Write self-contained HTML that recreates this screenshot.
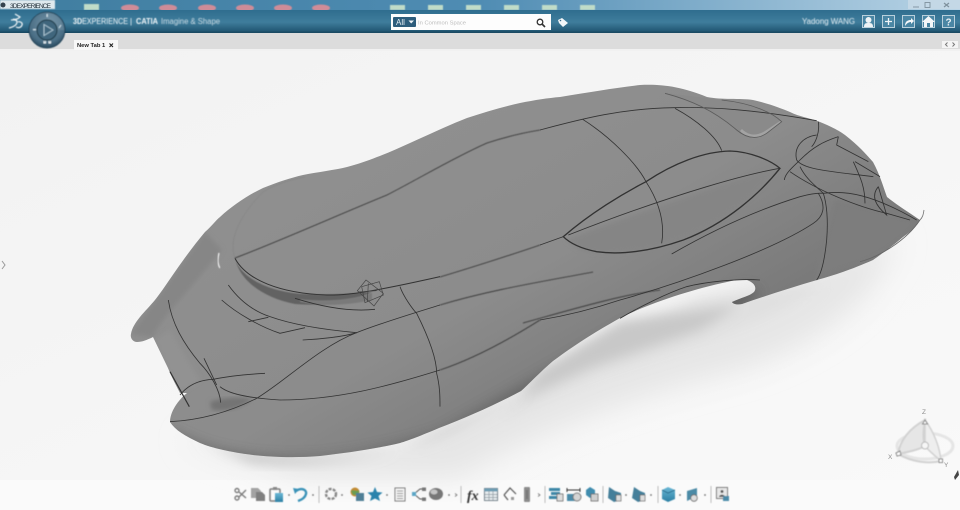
<!DOCTYPE html>
<html><head><meta charset="utf-8"><style>
html,body{margin:0;padding:0;background:#f6f6f6}
#p{position:relative;width:960px;height:510px;overflow:hidden;font-family:"Liberation Sans",sans-serif}
svg{position:absolute;left:0;top:0}
</style></head><body><div id="p">
<svg width="960" height="510" viewBox="0 0 960 510" xmlns="http://www.w3.org/2000/svg">
<defs>
<linearGradient id="bar" x1="0" y1="0" x2="0" y2="1"><stop offset="0" stop-color="#2f6d8e"/><stop offset=".55" stop-color="#3f7d9c"/><stop offset="1" stop-color="#1f5470"/></linearGradient>
<linearGradient id="sky" x1="0" y1="0" x2="1" y2="0"><stop offset="0" stop-color="#3f7d9f"/><stop offset=".5" stop-color="#4f8cb3"/><stop offset="1" stop-color="#b9d4e6"/></linearGradient>
<linearGradient id="bg" x1="0" y1="0" x2="1" y2="1"><stop offset="0" stop-color="#f2f2f2"/><stop offset="1" stop-color="#f9f9f9"/></linearGradient>
<linearGradient id="car" gradientUnits="userSpaceOnUse" x1="400" y1="140" x2="560" y2="420"><stop offset="0" stop-color="#8f8f8f"/><stop offset=".55" stop-color="#8c8c8c"/><stop offset="1" stop-color="#7a7a7a"/></linearGradient>
<radialGradient id="dial" cx=".5" cy=".35" r=".7"><stop offset="0" stop-color="#7393a7"/><stop offset=".7" stop-color="#4a6e85"/><stop offset="1" stop-color="#1c3c50"/></radialGradient>
<linearGradient id="blue" x1="0" y1="0" x2="0" y2="1"><stop offset="0" stop-color="#6bb8d6"/><stop offset="1" stop-color="#2b7fa3"/></linearGradient>
<filter id="b1"><feGaussianBlur stdDeviation=".45"/></filter>
<filter id="b2"><feGaussianBlur stdDeviation="2"/></filter>
<filter id="b6"><feGaussianBlur stdDeviation="6"/></filter>
<filter id="b14"><feGaussianBlur stdDeviation="14"/></filter>
<clipPath id="cc"><path d="M131,334C133,322 145,312 155,300C165,288 180,262 205,232C212,226 216,220 220,217C232,206 248,195 263,188C278,182 290,178 303,175C318,172 335,170 347,167C358,164 367,161 377,157C388,153 399,148 410,143C430,134 449,125 467,118C485,112 502,107 520,103C535,100 548,98 560,97C590,92 615,88 640,85C660,84 680,86 707,97C722,100 740,98 753,100C770,104 780,108 790,112C800,117 810,118 820,122C832,127 838,130 845,135C858,145 866,154 873,162C880,175 883,186 887,197C897,205 910,213 920,220C915,228 910,232 903,237C890,248 880,255 873,260C850,270 835,275 817,280C790,288 765,296 742,304C737,305 733,304 732,302C740,298 750,296 754,292C757,288 755,283 747,280C740,279 735,280 727,282C690,290 650,303 620,318C590,335 575,345 553,361C540,372 530,383 521,391C495,405 465,418 439,428C420,436 410,440 400,443C375,449 345,453 320,456C295,458 270,457 253,455C230,452 212,448 200,443C185,436 175,430 170,422C170,412 178,400 187,393L180,393C176,385 172,378 168,368L153,337C147,340 142,342 137,342C133,342 130,338 131,334Z"/></clipPath>
</defs>

<!-- canvas -->
<rect x="0" y="50" width="960" height="430" fill="url(#bg)"/>
<rect x="0" y="480" width="960" height="30" fill="#fafafa"/>
<!-- shadow -->
<path d="M180,440L300,478L460,478C520,440 620,400 740,370C800,350 840,325 870,290L900,240L620,320L400,440Z" fill="#e6e6e6" filter="url(#b14)"/>
<path d="M700,300L820,285C780,320 680,350 600,375L500,420L540,370Z" fill="#e0e0e0" filter="url(#b6)"/>
<path d="M190,436C240,460 340,464 405,448L530,392L470,422C420,452 320,470 250,462Z" fill="#c2c2c2" filter="url(#b6)"/>
<path d="M540,372L620,322L740,305L700,330L590,368L520,400Z" fill="#c8c8c8" filter="url(#b6)"/>

<!-- car -->
<g clip-path="url(#cc)">
<rect x="120" y="70" width="820" height="400" fill="url(#car)"/>
<!-- shading -->
<path d="M131,334L205,232L222,250C190,290 160,320 153,337Z" fill="#868686" filter="url(#b2)"/>
<path d="M170,430C240,470 340,465 440,432L553,368L625,325L745,286L760,292L740,310L560,380L420,450L250,470L160,440Z" fill="#585858" filter="url(#b6)" opacity=".7"/>
<path d="M210,402C222,398 240,396 252,399C242,408 226,412 212,410Z" fill="#737373" filter="url(#b2)"/>
<path d="M155,340L180,393L200,380L170,330Z" fill="#929292" filter="url(#b2)"/>
<!-- window shading -->
<path d="M566,240C630,215 710,190 778,168C750,205 700,235 650,248C620,254 590,254 580,250Z" fill="#858585" filter="url(#b2)"/>
<!-- grille panel -->
<path d="M665,93C690,100 715,112 737,130C747,138 757,140 767,133L782,122C774,113 754,103 722,100Z" fill="#8a8a8a"/>
<path d="M740,131C749,140 757,140 766,134L782,122L780,121L765,131C757,136 749,136 742,129Z" fill="#a3a3a3"/>
<!-- nose highlights -->
<path d="M835,200L880,210L918,222C900,245 870,262 840,270L815,280Z" fill="#7d7d7d" filter="url(#b2)"/>
<!-- disc lip -->
<path d="M235,258C240,278 270,292 303,294C325,295 345,294 372,292C350,304 320,306 295,304C265,298 240,282 235,258Z" fill="#626262" filter="url(#b1)"/>
<path d="M300,299C325,302 350,300 372,293L372,300C345,306 320,306 300,302Z" fill="#7a7a7a" filter="url(#b1)"/>
</g>
<path d="M219,253C217,260 218,265 220,268" stroke="#e8e8e8" stroke-width="1.400" fill="none" filter="url(#b1)"/>
<path d="M235,258C228,240 240,215 263,192C280,182 295,179 305,177" stroke="#808080" stroke-width=".5" fill="none" filter="url(#b1)"/>

<!-- long curves -->
<g fill="none" stroke="#333" stroke-width=".85" filter="url(#b1)">
<path d="M235,258C275,243 345,212 387,195C420,178 455,157 487,143C505,137 522,133 540,130"/>
<path d="M440,277C470,268 520,252 540,245"/>
<path d="M440,305C490,290 540,282 593,272"/>
<path d="M440,370C470,360 505,342 540,320"/>
<path d="M523,323C570,310 620,295 660,290"/>
</g>

<!-- curves zoom7 -->
<g transform="translate(120,230) scale(.33333)" fill="none" stroke="#333" stroke-width="2.500" filter="url(#b1)">
<path d="M345,85C380,150 480,190 620,195C680,197 760,185 960,140" stroke-width="3"/>
<path d="M325,165C350,200 390,240 450,260C520,285 620,300 710,308"/>
<path d="M305,210C350,250 420,290 480,310L555,293"/>
<path d="M385,275L445,262"/>
<path d="M548,330C600,328 670,320 710,308"/>
<path d="M150,575C250,570 340,540 410,505C500,450 600,350 710,308C780,280 880,250 960,225"/>
<path d="M300,470C330,495 400,505 480,510C650,510 800,470 960,420"/>
<path d="M145,210C155,280 190,340 240,400C270,430 300,480 302,518"/>
<path d="M252,385L290,465"/>
<path d="M150,425L208,530" stroke-width="3.500"/>
<path d="M180,495C200,470 230,450 280,448C340,435 400,432 435,430"/>
<path d="M840,170C850,200 880,240 890,250C930,330 950,390 950,430C960,470 960,500 960,530"/>
<path d="M525,205C620,235 700,245 765,238"/>
<g stroke="#444" stroke-width="2"><path d="M725,170L778,155L790,195L735,218Z"/><path d="M712,182L738,150L790,190L762,228Z"/><path d="M715,186L770,182M745,160L742,215"/></g>
</g>

<!-- curves zoom8 -->
<g transform="translate(540,80) scale(.33333)" fill="none" stroke="#333" stroke-width="2.500" filter="url(#b1)">
<path d="M0,150C130,115 250,85 400,83C520,80 650,90 830,122"/>
<path d="M128,118C210,170 290,250 318,305C360,370 375,430 365,490"/>
<path d="M405,85C470,120 530,170 545,212"/>
<path d="M70,470C150,400 250,340 318,305C400,250 490,215 570,213C630,215 690,240 720,265C660,340 560,430 430,480C330,515 240,525 170,515C120,505 90,490 70,470Z" stroke-width="4"/>
<path d="M0,495L70,470M85,465C200,420 350,365 500,320C600,290 660,275 720,265"/>
<path d="M375,40C450,60 520,90 590,150C620,175 650,180 680,160L725,125C700,100 640,70 545,60" stroke="#5b5b5b"/>
<path d="M395,522C520,450 650,390 780,350C810,342 830,338 850,340C860,370 865,420 860,480C855,530 845,580 830,600"/>
<path d="M835,340C860,380 850,410 820,430C700,510 420,610 240,660C150,690 60,710 0,720"/>
<path d="M240,715C300,680 380,640 440,620C500,605 600,595 660,600"/>
<path d="M733,300C735,280 760,260 780,240C820,200 850,185 895,170"/>
<path d="M770,240C760,200 790,170 830,165M770,240C790,270 880,275 1000,290"/>
<path d="M835,125C840,160 825,190 815,200"/>
<path d="M895,170L890,195L985,245M940,245C960,290 975,320 975,370M945,245L1020,290"/>
<path d="M750,275C830,330 950,380 1040,400L1110,420M850,340C920,330 1000,345 1130,420"/>
<path d="M1015,320C990,350 1010,380 1040,405L1015,320"/>
<path d="M780,260C800,300 830,320 850,340"/>
<path d="M1140,420C1150,410 1150,400 1152,390" stroke="#777"/>
<path d="M1140,420C1100,480 1020,530 960,545" stroke="#666"/>
</g>

<!-- title strip -->
<rect x="0" y="0" width="960" height="10" fill="url(#sky)"/>
<g filter="url(#b1)">
<g fill="#cf8c98"><ellipse cx="130" cy="8" rx="9" ry="3.500"/><ellipse cx="168" cy="8" rx="9" ry="3.500"/><ellipse cx="207" cy="8" rx="9" ry="3.500"/><ellipse cx="245" cy="8" rx="9" ry="3.500"/><ellipse cx="283" cy="8" rx="9" ry="3.500"/><ellipse cx="321" cy="8" rx="9" ry="3.500"/></g>
<g fill="#c0dcc8"><rect x="84" y="4" width="15" height="6"/><rect x="390" y="5" width="15" height="5"/><rect x="428" y="5" width="15" height="5"/><rect x="466" y="5" width="15" height="5"/><rect x="504" y="5" width="15" height="5"/><rect x="542" y="5" width="15" height="5"/><rect x="580" y="5" width="15" height="5"/></g>
<rect x="0" y="0" width="55" height="9" fill="#dfe9ee"/>
</g>
<circle cx="3" cy="5" r="2.500" fill="#34424e"/>
<text x="10" y="8" font-size="6.500" fill="#25323c" textLength="41">3DEXPERIENCE</text>
<rect x="908" y="0" width="52" height="9" fill="#c4d8e6"/>
<g stroke="#7f919d" fill="none" stroke-width=".9"><path d="M913,7H919"/><rect x="925" y="2.500" width="5" height="5"/><path d="M944,3L949,7M949,3L944,7" stroke-width="1.200"/></g>

<!-- blue bar -->
<rect x="0" y="10" width="960" height="22" fill="url(#bar)"/>
<rect x="0" y="32" width="960" height="18" fill="#dcdcdc"/>
<rect x="0" y="31.500" width="960" height="1.500" fill="#1a4a63"/>
<rect x="0" y="49" width="960" height="2" fill="#f1f1f1"/>
<rect x="74" y="40" width="44" height="10" fill="#f8f8f8"/>
<text x="77" y="47" font-size="5.800" font-weight="bold" fill="#222">New Tab 1</text>
<path d="M109.500,43.500L113,47M113,43.500L109.500,47" stroke="#222" stroke-width="1.100"/>
<rect x="942" y="41" width="16" height="7" fill="#f4f4f4"/>
<path d="M947.500,42.500L945.500,44.500L947.500,46.500M952.500,42.500L954.500,44.500L952.500,46.500" stroke="#777" fill="none"/>

<!-- DS logo -->
<g fill="none" stroke="#f2f6f8" stroke-width="1.200" filter="url(#b1)"><path d="M9,28C13,27 17,25 17,22C17,19 13,20 11,20M15,14L20,17C18,19 15,20 13,19M18,22C20,21 23,23 22,25C21,28 18,28 16,27"/></g>

<!-- compass -->
<g filter="url(#b1)">
<circle cx="47" cy="30" r="18" fill="url(#dial)" stroke="#1a3b50" stroke-width=".8"/>
<path d="M47,13A17,17 0 0 1 64,30L56,30A9,9 0 0 0 47,21Z" fill="#90aabb" opacity=".25"/>
<circle cx="47" cy="30" r="10" fill="#40667d" stroke="#21414f" stroke-width="1.200"/>
<path d="M44,24.500L53,30L44,35.500Z" fill="none" stroke="#a8c2d0" stroke-width="1"/>
<rect x="46.500" y="14" width="1.300" height="3" fill="#cfe0e8"/>
<rect x="33" y="29" width="3" height="1.300" fill="#cfe0e8"/>
<path d="M59,28L61,25" stroke="#cfe0e8"/>
<path d="M44,41v2h1.500v-2M49,41v2h1.500v-2" stroke="#e6f0f4" fill="none" stroke-width="1"/>
</g>

<!-- product title -->
<g font-size="8" filter="url(#b1)" fill="#eef4f7">
<text x="73" y="24" textLength="55" lengthAdjust="spacingAndGlyphs"><tspan font-weight="bold">3D</tspan>EXPERIENCE</text>
<text x="130" y="24">|</text>
<text x="136" y="24" font-weight="bold" textLength="22" lengthAdjust="spacingAndGlyphs">CATIA</text>
<text x="161" y="24" fill="#c9dae3" textLength="59" lengthAdjust="spacingAndGlyphs">Imagine &amp; Shape</text>
</g>

<!-- search -->
<rect x="391" y="14" width="160" height="16" fill="#fdfdfd"/>
<rect x="393" y="17" width="23" height="10" rx="1" fill="#2d5d7c"/>
<text x="396" y="25" font-size="8" fill="#e6eff4">All</text>
<path d="M408.500,20.500H414L411.200,23.500Z" fill="#eef4f7"/>
<text x="418" y="24.500" font-size="5.800" fill="#bdbdbd">In Common Space</text>
<circle cx="540" cy="22" r="2.800" fill="none" stroke="#333" stroke-width="1.300"/>
<path d="M542,24L545,27" stroke="#333" stroke-width="1.600"/>
<path d="M558,20L562,18L568,23L563,27L559,23Z" fill="#f3f7f9"/>
<circle cx="560.500" cy="20.500" r=".8" fill="#3a6d8c"/>

<!-- right bar -->
<text x="802" y="24" font-size="8" fill="#e6eff4" filter="url(#b1)" textLength="53" lengthAdjust="spacingAndGlyphs">Yadong WANG</text>
<g fill="none" stroke="#b9d0dc" stroke-width="1">
<rect x="862.500" y="15.500" width="12" height="12" fill="#4a86a4"/>
<rect x="882.500" y="15.500" width="12" height="12" fill="#4a86a4"/>
<rect x="902.500" y="15.500" width="12" height="12" fill="#4a86a4"/>
<rect x="922.500" y="15.500" width="12" height="12" fill="#4a86a4"/>
<rect x="942.500" y="15.500" width="12" height="12" fill="#4a86a4"/>
</g>
<circle cx="868.500" cy="20" r="3" fill="#eef3f6"/>
<path d="M864,27C864,23 866,23 868.500,23C871,23 873,23 873,27Z" fill="#eef3f6"/>
<path d="M888.500,18V25M885,21.500H892" stroke="#f0f5f8" stroke-width="1.300"/>
<path d="M905,26C905,21 908,20 911,20L911,18L914,21L911,24L911,22C909,22 907,23 905,26Z" fill="#f4f7f9"/>
<path d="M922,22L928.500,16L935,22H933V27H930V23H927V27H924V22Z" fill="#f4f7f9"/>
<text x="945.500" y="25.500" font-size="10" font-weight="bold" fill="#e8f0f4">?</text>

<!-- left handle -->
<path d="M2,261L5,265L2,269" fill="none" stroke="#999" stroke-width="1"/>

<!-- compass robot -->
<g filter="url(#b1)" fill="none" stroke="#d2d2d2">
<ellipse cx="925" cy="446" rx="28" ry="13" stroke-width="3" opacity=".5"/>
<path d="M925,420C910,428 900,440 898,454C908,452 918,450 925,446C922,436 924,428 925,420Z" fill="#e6e6e6" stroke-width="2"/>
<path d="M925,420C934,432 940,448 941,461C934,455 928,450 925,446Z" fill="#eeeeee" stroke-width="1.500"/>
<path d="M898,454C912,462 928,464 941,461" stroke-width="2"/>
<circle cx="925" cy="445.500" r="3.500" fill="#f6f6f6" stroke="#bbb"/>
<path d="M925,420L922.500,424H927.500Z" fill="#fff" stroke="#888"/>
<path d="M896,453L900,451L901,455L897,456Z" fill="#fff" stroke="#888"/>
<rect x="939" y="459" width="3.500" height="3.500" fill="#fff" stroke="#888"/>
</g>
<g font-size="6.500" fill="#8c8c8c"><text x="922" y="414">Z</text><text x="888" y="459">X</text><text x="944" y="467">Y</text></g>
<path d="M958,470L954,477L955,480L959,475Z" fill="#444"/>

<!-- toolbar -->
<g filter="url(#b1)">
<g stroke="#bdbdbd"><path d="M319,486V503M461,486V503M545,486V503M603,486V503M658,486V503M711,486V503" /></g>
<g fill="#6f6f6f"><circle cx="289" cy="495" r=".9"/><circle cx="313" cy="495" r=".9"/><circle cx="342" cy="495" r=".9"/><circle cx="387" cy="495" r=".9"/><circle cx="449" cy="495" r=".9"/><circle cx="626" cy="495" r=".9"/><circle cx="651" cy="495" r=".9"/><circle cx="680" cy="495" r=".9"/><circle cx="705" cy="495" r=".9"/></g>
<path d="M455,493.500L457,495L455,496.500M538,493.500L540,495L538,496.500" stroke="#777" fill="none" stroke-width=".8"/>
<!-- scissors -->
<g stroke="#7c7c7c" stroke-width="1.400" fill="none"><circle cx="237" cy="490.500" r="2"/><circle cx="237" cy="498" r="2"/><path d="M239,492L246,498M239,497L246,490"/></g>
<!-- copy -->
<path d="M251,488H258L261,491V498H251Z" fill="#a3a3a3"/><path d="M256,492H262L265,495V501H256Z" fill="#7f7f7f"/>
<!-- paste -->
<rect x="270" y="489" width="10" height="12" rx="1" fill="none" stroke="#7f7f7f" stroke-width="1.500"/><rect x="273" y="487" width="4" height="3" fill="#888"/><rect x="275" y="493" width="8" height="9" fill="url(#blue)"/>
<!-- undo -->
<path d="M296,491C302,487 307,490 306,494C305,498 301,500 298,501" stroke="#3b93b8" stroke-width="2.400" fill="none"/><path d="M293,488L299,489L295,494Z" fill="#3b93b8"/>
<!-- gear -->
<circle cx="331" cy="494" r="5" fill="none" stroke="#888" stroke-width="2.400" stroke-dasharray="3 1.200"/>
<!-- globe box -->
<circle cx="355" cy="492" r="4.500" fill="#c28a33"/><path d="M351,491C354,489 356,492 359,490V495H353Z" fill="#6c9c50"/><rect x="356" y="493" width="8" height="8" fill="#4f7f96"/>
<!-- star -->
<path d="M375,487L377,492L382.500,492.500L378.500,496L380,501L375,498.500L370,501L371.500,496L367.500,492.500L373,492Z" fill="#2b83ac"/>
<!-- doc -->
<rect x="395" y="488" width="10" height="13" fill="#f3f3f3" stroke="#777"/><path d="M397,491H403M397,493.500H403M397,496H403M397,498.500H403" stroke="#777" stroke-width=".8"/>
<!-- share -->
<g fill="none" stroke="#555"><path d="M414,494L420,489H424M414,494L420,499H424" /></g><rect x="412" y="492" width="4" height="4" fill="#5ba6c6"/><rect x="422" y="487.500" width="4" height="3.500" fill="#777"/><rect x="422" y="497.500" width="4" height="3.500" fill="#777"/>
<!-- sphere -->
<ellipse cx="436" cy="494" rx="7" ry="6" fill="#777"/><ellipse cx="434" cy="492" rx="3.500" ry="2.500" fill="#c4c4c4"/>
<!-- fx -->
<text x="467" y="500" font-family="Liberation Serif,serif" font-style="italic" font-weight="bold" font-size="14" fill="#333">fx</text>
<!-- table -->
<rect x="484.500" y="488.500" width="13" height="12" fill="#e7ecef" stroke="#6f7f88"/><rect x="484.500" y="488.500" width="13" height="3" fill="#6e9db4"/><path d="M489,491V500M493,491V500M485,494.500H497M485,497.500H497" stroke="#8a979e" stroke-width=".7"/>
<!-- arrow -->
<path d="M504,495L510,488L516,494" stroke="#555" fill="none" stroke-width="1.200"/><path d="M504,495L508,500" stroke="#555" fill="none" stroke-width="1.200"/><rect x="511" y="497" width="3" height="3" fill="#999"/>
<!-- phone -->
<rect x="524" y="487" width="6" height="15" rx="1" fill="#8c8c8c"/><rect x="526" y="490" width="2" height="9" fill="#777"/>
<!-- group -->
<g fill="#3c87a7"><rect x="549" y="488" width="11" height="3"/><rect x="551" y="492" width="9" height="3"/><rect x="549" y="496" width="9" height="3"/></g><rect x="557" y="494" width="6" height="7" fill="#ddd" stroke="#666" stroke-width=".8"/>
<path d="M567,490H580M567,488V492M580,488V492" stroke="#333" stroke-width="1"/><rect x="567" y="494" width="9" height="7" fill="#4b8ba8"/><circle cx="577" cy="497" r="4" fill="#d4d4d4" stroke="#777"/>
<path d="M590,487L595,490V495L590,498L586,495V490Z" fill="#3f8cae"/><rect x="591" y="494" width="7" height="7" fill="#cfcfcf" stroke="#666" stroke-width=".8"/>
<path d="M609,487L615,491L621,493V500L614,502L608,498Z" fill="#447f9a"/><rect x="616" y="495" width="5" height="6" fill="#ddd" stroke="#666" stroke-width=".7"/>
<path d="M634,487L640,491L645,493V500L638,502L632,498Z" fill="#447f9a"/><rect x="640" y="495" width="5" height="6" fill="#ddd" stroke="#666" stroke-width=".7"/>
<!-- cube -->
<path d="M668,487L675,490V499L668,502L662,499V490Z" fill="url(#blue)"/><path d="M662,490L668,493L675,490" stroke="#1f6485" fill="none" stroke-width=".8"/>
<path d="M687,491L697,488V496L687,501Z" fill="#4c8aa6"/><circle cx="694" cy="498" r="3.300" fill="#ddd" stroke="#666" stroke-width=".8"/>
<rect x="716.500" y="487.500" width="11" height="11" fill="#e7e7e7" stroke="#777"/><circle cx="722" cy="491.500" r="1.500" fill="#555"/><path d="M719,497C719,494 725,494 725,497" fill="#555"/><rect x="723" y="496" width="6" height="5" fill="#4b8ba8"/>
</g>
</svg>
</div></body></html>
